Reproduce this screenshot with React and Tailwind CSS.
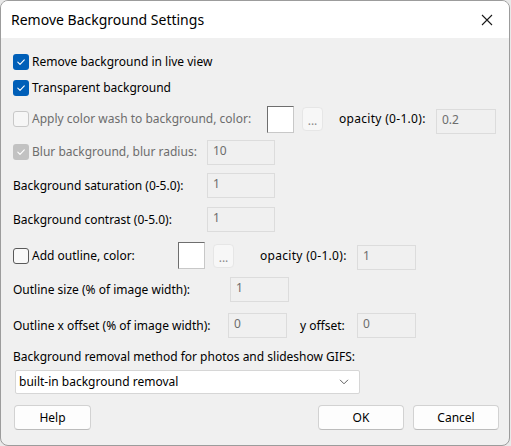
import React from "react";

const Check = ({ checked, disabled }) => {
  if (checked) {
    return (
      <span
        className={`flex items-center justify-center w-4 h-4 rounded-[3px] shrink-0 ${
          disabled ? "bg-[#c2c2c2]" : "bg-[#005fb8]"
        }`}
      >
        <svg width="10" height="10" viewBox="0 0 10 10" fill="none">
          <path d="M1.8 5.2 L4 7.3 L8.3 2.8" stroke="white" strokeWidth="1.1" strokeLinecap="round" strokeLinejoin="round" />
        </svg>
      </span>
    );
  }
  return (
    <span
      className={`w-4 h-4 rounded-[3px] shrink-0 border ${
        disabled ? "border-[#c8c8c8] bg-[#f6f6f6]" : "border-[#5a5a5a] bg-[#f9f9f9]"
      }`}
    />
  );
};

const Field = ({ value, w = "w-[68px]" }) => (
  <div
    className={`${w} h-[25px] border border-[#dcdcdc] bg-[#f0f0f0] text-[#6d6d6d] pl-[5px] flex items-start pt-[1px] text-[12px] shrink-0`}
  >
    {value}
  </div>
);

const Swatch = () => (
  <div className="w-[27px] h-[27px] bg-white border border-[#6e6e6e] border-r-[#c8c8c8] border-b-[#c8c8c8] shrink-0" />
);

const Dots = () => (
  <div className="w-[21px] h-[24px] rounded-[4px] bg-[#f7f7f7] border border-[#e6e6e6] text-[#8a8a8a] flex items-end justify-center pb-[3px] text-[12px] leading-none shrink-0">
    ...
  </div>
);

const Btn = ({ children, w }) => (
  <button
    className={`${w} h-[25px] bg-[#fdfdfd] border border-[#d2d2d2] border-b-[#bcbcbc] rounded-[4px] text-[12px] text-black flex items-center justify-center`}
  >
    {children}
  </button>
);

export default function App() {
  return (
    <div
      className="w-[511px] h-[446px] bg-[#e9e9e9]"
      style={{ fontFamily: '"Noto Sans", "Open Sans", sans-serif' }}
    >
      <div className="w-[510px] h-[446px] border border-[#9c9c9c] rounded-[8px] overflow-hidden flex flex-col bg-[#f0f0f0]">
        <div className="h-[37px] bg-white flex items-center justify-between pl-[10px] pr-[16px] shrink-0">
          <span className="text-[14px] text-black">Remove Background Settings</span>
          <svg width="12" height="12" viewBox="0 0 12 12">
            <path d="M1 1 L11 11 M11 1 L1 11" stroke="#1a1a1a" strokeWidth="1.1" />
          </svg>
        </div>

        <div className="flex flex-col pl-[12px] pt-[11px] text-[12px] text-black">
          <div className="h-[26px] flex items-center gap-[3px]">
            <Check checked />
            <span>Remove background in live view</span>
          </div>
          <div className="h-[26px] flex items-center gap-[3px]">
            <Check checked />
            <span>Transparent background</span>
          </div>

          <div className="h-[36px] flex items-center">
            <div className="w-[254px] flex items-center gap-[3px] text-[#6d6d6d]">
              <Check disabled />
              <span>Apply color wash to background, color:</span>
            </div>
            <Swatch />
            <div className="ml-[8px]">
              <Dots />
            </div>
            <span className="ml-[16px] w-[97px] tracking-[0.3px]">opacity (0-1.0):</span>
            <div className="mt-[4px]">
              <Field value="0.2" w="w-[60px]" />
            </div>
          </div>

          <div className="h-[30px] flex items-center">
            <div className="w-[194px] flex items-center gap-[3px] text-[#6d6d6d]">
              <Check checked disabled />
              <span>Blur background, blur radius:</span>
            </div>
            <Field value="10" />
          </div>

          <div className="h-[37px] flex items-center">
            <span className="w-[194px]">Background saturation (0-5.0):</span>
            <Field value="1" />
          </div>

          <div className="h-[31px] flex items-center">
            <span className="w-[194px]">Background contrast (0-5.0):</span>
            <Field value="1" />
          </div>

          <div className="h-[41px] flex items-center">
            <div className="w-[165px] flex items-center gap-[3px]">
              <Check />
              <span>Add outline, color:</span>
            </div>
            <Swatch />
            <div className="ml-[8px]">
              <Dots />
            </div>
            <span className="ml-[26px] w-[97px] tracking-[0.3px]">opacity (0-1.0):</span>
            <div className="mt-[4px]">
              <Field value="1" w="w-[59px]" />
            </div>
          </div>

          <div className="h-[27px] flex items-center">
            <span className="w-[217px]">Outline size (% of image width):</span>
            <Field value="1" w="w-[59px]" />
          </div>

          <div className="h-[45px] flex items-center">
            <span className="w-[215px]">Outline x offset (% of image width):</span>
            <Field value="0" w="w-[59px]" />
            <span className="ml-[13px] w-[57px]">y offset:</span>
            <Field value="0" w="w-[59px]" />
          </div>

          <div className="h-[18px] flex items-center">
            <span>Background removal method for photos and slideshow GIFS:</span>
          </div>

          <div className="mt-[4px] ml-[2px] w-[345px] h-[24px] bg-white border border-[#d6d6d6] rounded-[2px] flex items-center justify-between pl-[3px] pr-[10px]">
            <span>built-in background removal</span>
            <svg width="10" height="6" viewBox="0 0 10 6">
              <path d="M1 0.8 L5 4.8 L9 0.8" stroke="#606060" strokeWidth="1" fill="none" />
            </svg>
          </div>

          <div className="mt-[11px] ml-[1px] w-[485px] flex items-center">
            <Btn w="w-[77px]">Help</Btn>
            <div className="ml-auto flex gap-[9px]">
              <Btn w="w-[86px]">OK</Btn>
              <Btn w="w-[86px]">Cancel</Btn>
            </div>
          </div>
        </div>
      </div>
    </div>
  );
}
